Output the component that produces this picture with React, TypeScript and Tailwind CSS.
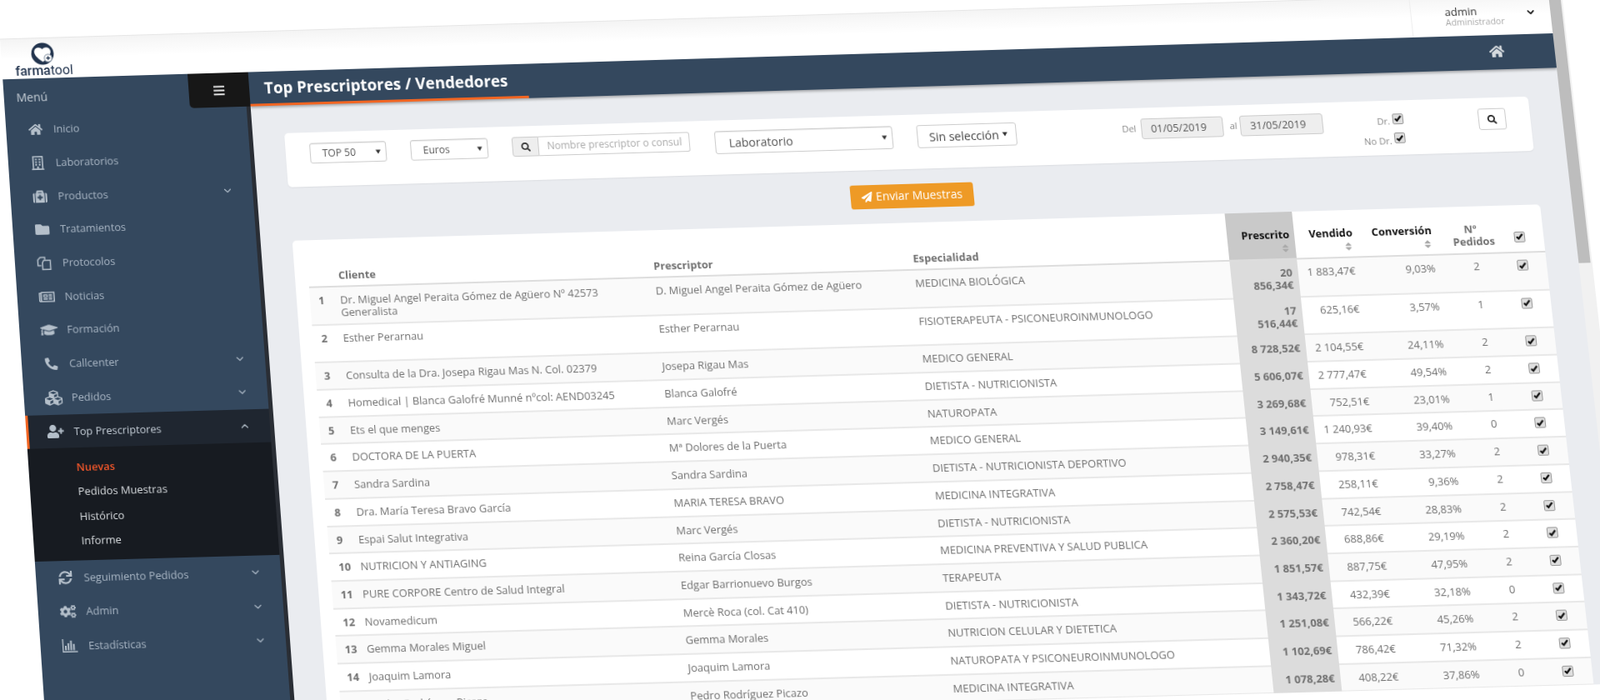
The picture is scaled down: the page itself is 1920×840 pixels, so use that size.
import type { ReactNode } from "react";
import { ChevronDown, ChevronUp } from "lucide-react";
import {
  FaBars, FaCogs, FaCubes, FaFolder, FaGraduationCap, FaHome, FaMedkit, FaPaperPlane, FaPhone,
  FaRegBuilding, FaRegNewspaper, FaSearch, FaSort, FaSync, FaUserPlus,
} from "react-icons/fa";

// ── Page tilt ────────────────────────────────────────────────────────────────

const PAGE_W = 1877;
const PAGE_H = 830;

type Pt = [number, number];

/** CSS matrix3d that maps the flat PAGE_W x PAGE_H page onto a four-cornered quad. */
function quadMatrix([x0, y0]: Pt, [x1, y1]: Pt, [x2, y2]: Pt, [x3, y3]: Pt): string {
  const dx1 = x1 - x2, dx2 = x3 - x2, sx = x0 - x1 + x2 - x3;
  const dy1 = y1 - y2, dy2 = y3 - y2, sy = y0 - y1 + y2 - y3;
  const den = dx1 * dy2 - dx2 * dy1;
  const g = (sx * dy2 - dx2 * sy) / den;
  const h = (dx1 * sy - sx * dy1) / den;
  const a = x1 - x0 + g * x1, b = x3 - x0 + h * x3;
  const d = y1 - y0 + g * y1, e = y3 - y0 + h * y3;
  return `matrix3d(${[
    a / PAGE_W, d / PAGE_W, 0, g / PAGE_W,
    b / PAGE_H, e / PAGE_H, 0, h / PAGE_H,
    0, 0, 1, 0,
    x0, y0, 0, 1,
  ].join(",")})`;
}

const PAGE_TILT = quadMatrix([0, 46.5], [1874, -9.5], [1968, 820], [55, 872]);

// ── Data ─────────────────────────────────────────────────────────────────────

type MenuItem = { label: string; icon: ReactNode; chevron?: boolean };

const BarChartIcon = (
  <svg width="18" height="16" viewBox="0 0 18 16" fill="currentColor">
    <path d="M0 0h1.4v14.6H18V16H0z" />
    <path d="M3 8h2v5.5H3zM6.2 5h2v8.5h-2zM9.4 2h2v11.5h-2zM12.6 6h2v7.5h-2z" />
  </svg>
);

const ProtocolIcon = (
  <svg width="18" height="17" viewBox="0 0 18 17" fill="none" stroke="currentColor" strokeWidth="1.5">
    <path d="M5.5 11.5H1.5V4.5L4.5 1.5h5.5v3" />
    <path d="M8.5 5.2h8v11h-9.5V8z" />
  </svg>
);

const MENU_TOP: MenuItem[] = [
  { label: "Inicio", icon: <FaHome size={17} /> },
  { label: "Laboratorios", icon: <FaRegBuilding size={17} /> },
  { label: "Productos", icon: <FaMedkit size={17} />, chevron: true },
  { label: "Tratamientos", icon: <FaFolder size={17} /> },
  { label: "Protocolos", icon: ProtocolIcon },
  { label: "Noticias", icon: <FaRegNewspaper size={19} /> },
  { label: "Formación", icon: <FaGraduationCap size={21} /> },
  { label: "Callcenter", icon: <FaPhone size={15} className="-scale-x-100" />, chevron: true },
  { label: "Pedidos", icon: <FaCubes size={21} />, chevron: true },
];

const MENU_BOTTOM: MenuItem[] = [
  { label: "Seguimiento Pedidos", icon: <FaSync size={16} />, chevron: true },
  { label: "Admin", icon: <FaCogs size={19} />, chevron: true },
  { label: "Estadísticas", icon: BarChartIcon, chevron: true },
];

const SUBMENU = ["Nuevas", "Pedidos Muestras", "Histórico", "Informe"];

type Row = {
  client: ReactNode; prescriber: string; specialty: string;
  prescribed: ReactNode; sold: string; conv: string; orders: number; tall?: boolean;
};

const ROWS: Row[] = [
  { client: <>Dr. Miguel Angel Peraita Gómez de Agüero Nº 42573<br />Generalista</>, prescriber: "D. Miguel Angel Peraita Gómez de Agüero", specialty: "MEDICINA BIOLÓGICA", prescribed: <>20<br />856,34€</>, sold: "1 883,47€", conv: "9,03%", orders: 2, tall: true },
  { client: "Esther Perarnau", prescriber: "Esther Perarnau", specialty: "FISIOTERAPEUTA - PSICONEUROINMUNOLOGO", prescribed: <>17<br />516,44€</>, sold: "625,16€", conv: "3,57%", orders: 1, tall: true },
  { client: "Consulta de la Dra. Josepa Rigau Mas N. Col. 02379", prescriber: "Josepa Rigau Mas", specialty: "MEDICO GENERAL", prescribed: "8 728,52€", sold: "2 104,55€", conv: "24,11%", orders: 2 },
  { client: "Homedical | Blanca Galofré Munné nºcol: AEND03245", prescriber: "Blanca Galofré", specialty: "DIETISTA - NUTRICIONISTA", prescribed: "5 606,07€", sold: "2 777,47€", conv: "49,54%", orders: 2 },
  { client: "Ets el que menges", prescriber: "Marc Vergés", specialty: "NATUROPATA", prescribed: "3 269,68€", sold: "752,51€", conv: "23,01%", orders: 1 },
  { client: "DOCTORA DE LA PUERTA", prescriber: "Mª Dolores de la Puerta", specialty: "MEDICO GENERAL", prescribed: "3 149,61€", sold: "1 240,93€", conv: "39,40%", orders: 0 },
  { client: "Sandra Sardina", prescriber: "Sandra Sardina", specialty: "DIETISTA - NUTRICIONISTA DEPORTIVO", prescribed: "2 940,35€", sold: "978,31€", conv: "33,27%", orders: 2 },
  { client: "Dra. María Teresa Bravo García", prescriber: "MARIA TERESA BRAVO", specialty: "MEDICINA INTEGRATIVA", prescribed: "2 758,47€", sold: "258,11€", conv: "9,36%", orders: 2 },
  { client: "Espai Salut Integrativa", prescriber: "Marc Vergés", specialty: "DIETISTA - NUTRICIONISTA", prescribed: "2 575,53€", sold: "742,54€", conv: "28,83%", orders: 2 },
  { client: "NUTRICION Y ANTIAGING", prescriber: "Reina García Closas", specialty: "MEDICINA PREVENTIVA Y SALUD PUBLICA", prescribed: "2 360,20€", sold: "688,86€", conv: "29,19%", orders: 2 },
  { client: "PURE CORPORE Centro de Salud Integral", prescriber: "Edgar Barrionuevo Burgos", specialty: "TERAPEUTA", prescribed: "1 851,57€", sold: "887,75€", conv: "47,95%", orders: 2 },
  { client: "Novamedicum", prescriber: "Mercè Roca (col. Cat 410)", specialty: "DIETISTA - NUTRICIONISTA", prescribed: "1 343,72€", sold: "432,39€", conv: "32,18%", orders: 0 },
  { client: "Gemma Morales Miguel", prescriber: "Gemma Morales", specialty: "NUTRICION CELULAR Y DIETETICA", prescribed: "1 251,08€", sold: "566,22€", conv: "45,26%", orders: 2 },
  { client: "Joaquim Lamora", prescriber: "Joaquim Lamora", specialty: "NATUROPATA Y PSICONEUROINMUNOLOGO", prescribed: "1 102,69€", sold: "786,42€", conv: "71,32%", orders: 2 },
  { client: "Pedro Rodríguez Picazo", prescriber: "Pedro Rodríguez Picazo", specialty: "MEDICINA INTEGRATIVA", prescribed: "1 078,28€", sold: "408,22€", conv: "37,86%", orders: 0 },
];

const COLS = "grid grid-cols-[36px_377px_309.5px_375.5px_80px_75px_94px_86px_29.5px]";

// ── Bits ─────────────────────────────────────────────────────────────────────

function Tick() {
  return (
    <span className="flex h-[13px] w-[13px] items-center justify-center rounded-[2px] border border-[#9a9a9a] bg-[#dedede]">
      <svg width="9" height="8" viewBox="0 0 9 8" fill="none" stroke="#111" strokeWidth="2.2">
        <path d="M1 4.2l2.3 2.3L8 1" />
      </svg>
    </span>
  );
}

function Caret({ className = "" }: { className?: string }) {
  return (
    <svg width="6" height="6" viewBox="0 0 7 6" fill="#333" className={className}>
      <path d="M0 0h7L3.5 6z" />
    </svg>
  );
}

function SelectBox({ label, className }: { label: string; className: string }) {
  return (
    <div className={`flex items-center justify-between rounded-[3px] border border-[#ccc] bg-white shadow-[inset_0_1px_1px_rgba(0,0,0,0.08)] text-[#555] ${className}`}>
      {label}
      <Caret />
    </div>
  );
}

function MenuRow({ item, active }: { item: MenuItem; active?: boolean }) {
  return (
    <div className={`flex h-[40.7px] items-center pl-[24px] pr-[23px] text-[12.7px] ${
      active ? "border-l-[3px] border-[#f26522] bg-[#1f2630] !pl-[21px] text-[#c3ccd5]" : "text-[#a9b6c4]"
    }`}>
      <span className="mr-[11px] flex w-[22px] justify-center text-[#b4bfca]">{item.icon}</span>
      {item.label}
      {item.chevron && (
        active
          ? <ChevronUp size={14} className="ml-auto text-[#b4bfca]" />
          : <ChevronDown size={14} className="ml-auto text-[#a9b6c4]" />
      )}
    </div>
  );
}

function SortHead({ label, dark = true }: { label: string; dark?: boolean }) {
  return (
    <div className={`flex flex-col items-end pr-[6px] pt-[18px] font-bold ${dark ? "text-[#111]" : "text-[#666]"}`}>
      <span>{label}</span>
      <FaSort size={12} className="mt-[1px] text-[#aaa]" />
    </div>
  );
}

// ── Page ─────────────────────────────────────────────────────────────────────

function Sidebar() {
  return (
    <aside className="flex w-[296px] shrink-0 flex-col border-r-[5px] border-[#2a2e35] bg-[#34485e]">
      <div className="flex h-[42.5px] items-start justify-between">
        <span className="pl-[15px] pt-[12px] text-[14px] text-[#c6ced6]">Menú</span>
        <div className="z-10 flex h-[42px] w-[73.5px] -mr-[5px] items-center justify-center rounded-bl-[5px] bg-[#171717] text-[#e6e6e6]">
          <FaBars size={15} />
        </div>
      </div>
      {MENU_TOP.map(m => <MenuRow key={m.label} item={m} />)}
      <MenuRow item={{ label: "Top Prescriptores", icon: <FaUserPlus size={20} />, chevron: true }} active />
      <div className="bg-[#171b21] pb-[8px] pt-[8px] pl-[57px] text-[12.8px] text-[#d8dcdf]">
        {SUBMENU.map((s, i) => (
          <div key={s} className={`flex h-[29.6px] items-center ${i === 0 ? "font-semibold text-[#f0562a]" : ""}`}>{s}</div>
        ))}
      </div>
      {MENU_BOTTOM.map(m => <MenuRow key={m.label} item={m} />)}
    </aside>
  );
}

function FilterCard() {
  return (
    <div className="flex h-[66px] w-[1489px] shrink-0 items-start rounded-[5px] bg-white pl-[29px] pt-[13px] text-[12px] shadow-[0_1px_2px_rgba(0,0,0,0.06)]">
      <SelectBox label="TOP 50" className="h-[25px] w-[92px] pl-[14px] pr-[6px]" />
      <SelectBox label="Euros" className="ml-[29px] h-[25px] w-[93px] pl-[14px] pr-[6px]" />
      <div className="ml-[29px] flex h-[24px] w-[213px]">
        <div className="flex w-[32px] items-center justify-center rounded-l-[3px] border border-[#ccc] bg-[#eee] text-[#333]">
          <FaSearch size={11} />
        </div>
        <input
          readOnly
          placeholder="Nombre prescriptor o consulta"
          className="min-w-0 flex-1 rounded-r-[3px] border border-l-0 border-[#ccc] bg-white pl-[10px] pr-[8px] text-[12px] placeholder:text-[#aaa]"
        />
      </div>
      <SelectBox label="Laboratorio" className="ml-[29.7px] h-[28px] w-[213px] pl-[16px] pr-[6px] text-[14px]" />
      <div className="ml-[29.5px] flex h-[28px] w-[119px] items-center justify-center gap-[4px] rounded-[3px] border border-[#ccc] bg-white pl-[3px] text-[14px] text-[#444]">
        Sin selección <Caret />
      </div>
      <div className="ml-[126px] flex h-[25px] items-center text-[11px] text-[#888]">
        <span className="w-[22.5px]">Del</span>
        <input readOnly value="01/05/2019" className="h-full w-[98px] rounded-[3px] border border-[#ccc] bg-[#eee] px-[11px] text-[12.5px] text-[#555]" />
        <span className="w-[20.5px] pl-[8px]">al</span>
        <input readOnly value="31/05/2019" className="h-full w-[98.7px] rounded-[3px] border border-[#ccc] bg-[#eee] px-[11px] text-[12.5px] text-[#555]" />
      </div>
      <div className="ml-[36px] flex w-[60px] flex-col items-end gap-[7px] pt-[1px] text-[11px] text-[#888]">
        <label className="flex items-center gap-[3px]"><span className="translate-y-[3px]">Dr.</span><Tick /></label>
        <label className="flex items-center gap-[3px]"><span className="translate-y-[3px]">No Dr.</span><Tick /></label>
      </div>
      <button className="ml-[89px] flex h-[26px] w-[33px] items-center justify-center rounded-[3px] border border-[#ccc] bg-white text-[#222]">
        <FaSearch size={11} />
      </button>
    </div>
  );
}

function TopTable() {
  return (
    <div className="min-h-0 w-[1489px] flex-1 overflow-hidden rounded-t-[5px] bg-white pl-[16px] text-[12.7px] text-[#707070]">
      <div className={`${COLS} mt-[12px] h-[46px] border-b-2 border-[#ddd]`}>
        <span />
        <span className="pt-[22px] font-bold">Cliente</span>
        <span className="pt-[22px] font-bold">Prescriptor</span>
        <span className="pt-[22px] font-bold">Especialidad</span>
        <div className="-mt-[12px] bg-[#c9c9c9]"><SortHead label="Prescrito" /></div>
        <div className="-mt-[12px]"><SortHead label="Vendido" /></div>
        <div className="-mt-[12px]"><SortHead label="Conversión" /></div>
        <div className="flex flex-col items-center pt-[8px] font-bold leading-[15px]">
          <span className="pr-[6px]">Nº</span>
          <span>Pedidos</span>
        </div>
        <div className="flex items-center justify-center pr-[6px] pt-[8px]"><Tick /></div>
      </div>
      {ROWS.map((r, i) => (
        <div
          key={i}
          className={`${COLS} border-b-2 border-[#e8e8e8] leading-[15px] ${r.tall ? "h-[45.7px]" : "h-[32.7px]"} ${i % 2 === 0 ? "bg-[#fafafa]" : "bg-white"}`}
        >
          <span className="pl-[10px] pt-[8px] font-bold">{i + 1}</span>
          <span className="pt-[8px]">{r.client}</span>
          <span className="pt-[8px]">{r.prescriber}</span>
          <span className="pt-[8px]">{r.specialty}</span>
          <span className="-mb-[2px] bg-[#dcdcdc] pr-[7px] pt-[8px] text-right font-bold">{r.prescribed}</span>
          <span className="pr-[7px] pt-[8px] text-right">{r.sold}</span>
          <span className="pr-[6px] pt-[8px] text-right">{r.conv}</span>
          <span className="pt-[7px] text-center">{r.orders}</span>
          <span className="flex justify-center pr-[6px] pt-[8px]"><Tick /></span>
        </div>
      ))}
    </div>
  );
}

export default function App() {
  return (
    <div className="h-[840px] w-[1920px] overflow-hidden bg-white font-['Open_Sans',sans-serif]">
      <div
        className="flex h-[830px] w-[1877px] origin-top-left blur-[0.6px]"
        style={{ transform: PAGE_TILT }}
      >
        <div className="flex w-[1861px] flex-col bg-[#eaecf0]">
          {/* Logo strip */}
          <header className="flex h-[50px] shrink-0 border-t border-[#e6e6e6] bg-gradient-to-b from-[#f4f4f4] to-white to-50%">
            <div className="ml-[16px] flex w-[80px] flex-col">
              <svg width="28" height="28" viewBox="0 0 28 28" className="ml-[20px] mt-[5px] shrink-0">
                <circle cx="14" cy="14" r="13.5" fill="#22344e" />
                <path d="M14 24C6.5 18.5 3.6 14.5 4.2 10.5 5 5.6 11.4 4.8 14 8.4 16.6 4.8 23 5.6 23.8 10.5c.6 4-2.3 8-9.8 13.5z" fill="#fff" />
                <circle cx="20.5" cy="19.5" r="4.6" fill="#fff" stroke="#8a97a6" strokeWidth="1.1" />
                <path d="M20.5 17.2v4.6M18.2 19.5h4.6" stroke="#22344e" strokeWidth="1.4" />
              </svg>
              <span className="-mt-[2px] font-['Roboto',sans-serif] text-[16px] leading-[18px] text-[#22344e]">
                <b className="font-medium">farma</b>tool
              </span>
            </div>
            <div className="ml-auto flex h-full w-[167px] border-l border-[#eee] pl-[40px] pr-[17px]">
              <div className="pt-[13px] leading-[13px]">
                <div className="text-[13px] text-[#333]">admin</div>
                <div className="text-[10.5px] text-[#aaa]">Administrador</div>
              </div>
              <ChevronDown size={13} strokeWidth={3} className="ml-auto mt-[16px] text-[#111]" />
            </div>
          </header>

          <div className="flex min-h-0 flex-1">
            <Sidebar />
            <main className="flex min-w-0 flex-1 flex-col">
              {/* Title bar */}
              <div className="flex h-[42px] shrink-0 flex-col bg-[#34485e] shadow-[0_2px_3px_rgba(0,0,0,0.3)]">
                <div className="flex flex-1 items-center justify-between pl-[18px] pr-[60px] pt-[1px]">
                  <h1 className="text-[18.8px] font-bold text-white">Top Prescriptores / Vendedores</h1>
                  <FaHome size={18} className="text-[#d5dade]" />
                </div>
                <div className="h-[3px] w-[335px] bg-[#f26522]" />
              </div>

              <div className="flex min-h-0 flex-1 flex-col pl-[38px] pt-[34px]">
                <FilterCard />
                <div className="flex w-[1489px] shrink-0 justify-center py-[18px]">
                  <button className="flex h-[29px] w-[147px] items-center justify-center gap-[4px] rounded-[3px] bg-[#ee9a26] text-[13.8px] text-white">
                    <FaPaperPlane size={13} /> Enviar Muestras
                  </button>
                </div>
                <TopTable />
              </div>
            </main>
          </div>
        </div>

        {/* Browser scrollbar */}
        <div className="w-[16px] shrink-0 bg-[#f1f1f1]">
          <div className="h-[329px] w-[14px] bg-[#bdbdbd]" />
        </div>
      </div>
    </div>
  );
}
